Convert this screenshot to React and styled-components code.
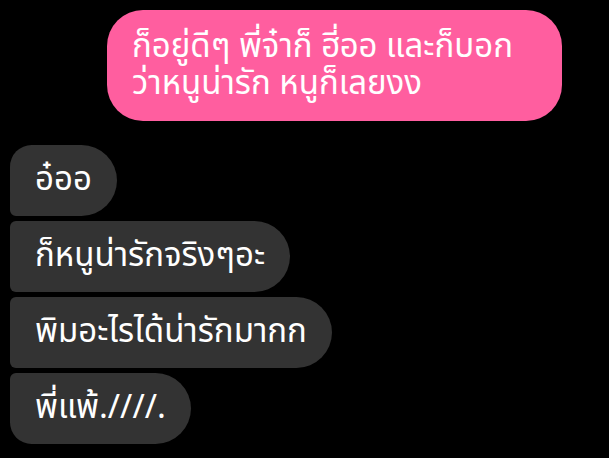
import React from "react";
import styled, { createGlobalStyle } from "styled-components";

const Global = createGlobalStyle`
  html, body { margin: 0; padding: 0; background: #000; }
  body { font-family: "Noto Sans Thai", "Noto Sans Thai UI", "Noto Sans", sans-serif; }
`;

const Thread = styled.div`
  width: 609px;
  height: 458px;
  box-sizing: border-box;
  padding: 10px 47px 0 10px;
  display: flex;
  flex-direction: column;
  background: #000;
  overflow: hidden;
`;

const Group = styled.div`
  display: flex;
  flex-direction: column;
  align-items: ${(p) => (p.$mine ? "flex-end" : "flex-start")};
  gap: 5px;
  margin-top: ${(p) => p.$gap || 0}px;
`;

const Bubble = styled.div`
  box-sizing: border-box;
  padding: ${(p) => (p.$mine ? "19px 25px 18px" : "17px 25px")};
  width: ${(p) => (p.$mine ? "455px" : "auto")};
  background: ${(p) => (p.$mine ? "#ff5e9f" : "#333333")};
  color: #fff;
  font-size: 33px;
  line-height: 37px;
  border-radius: ${(p) => p.$radius};
  white-space: pre-line;
`;

const incoming = [
  { text: "อ๋ออ", radius: "22px 36px 36px 6px" },
  { text: "ก็หนูน่ารักจริงๆอะ", radius: "6px 36px 36px 6px" },
  { text: "พิมอะไรได้น่ารักมากก", radius: "6px 36px 36px 6px" },
  { text: "พี่แพ้.////.", radius: "6px 36px 36px 22px" },
];

export default function App() {
  return (
    <>
      <Global />
      <Thread>
        <Group $mine>
          <Bubble $mine $radius="36px">
            {"ก็อยู่ดีๆ พี่จ๋าก็ ฮี่ออ และก็บอก\nว่าหนูน่ารัก หนูก็เลยงง"}
          </Bubble>
        </Group>
        <Group $gap={24}>
          {incoming.map((m, i) => (
            <Bubble key={i} $radius={m.radius}>
              {m.text}
            </Bubble>
          ))}
        </Group>
      </Thread>
    </>
  );
}
